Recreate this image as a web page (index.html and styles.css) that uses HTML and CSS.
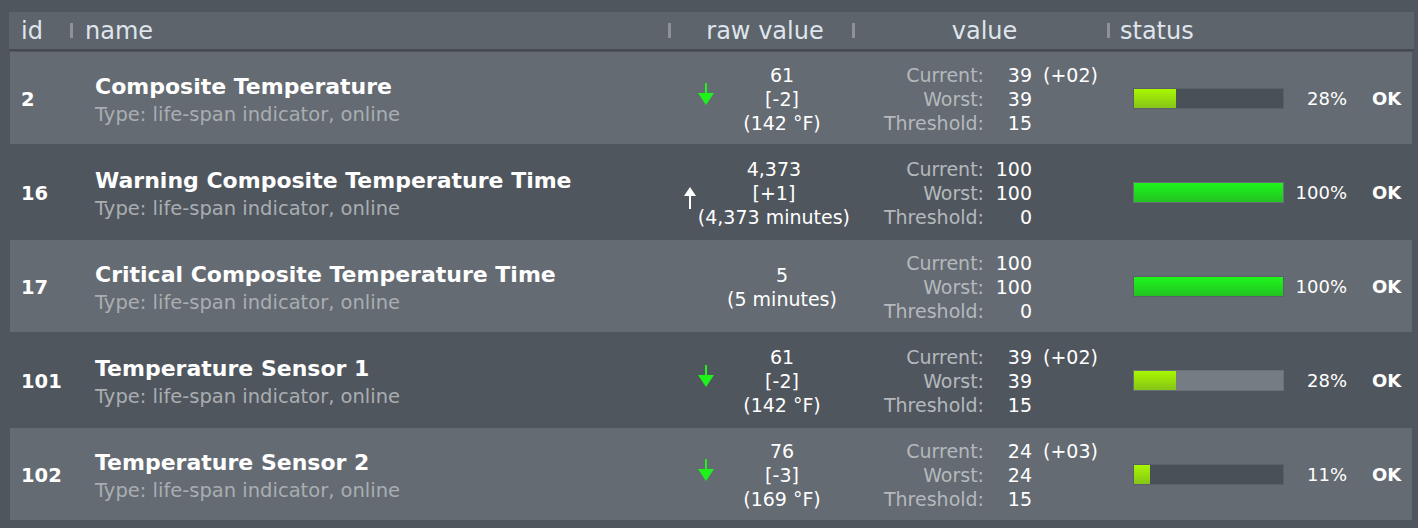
FILE: index.html
```html
<!DOCTYPE html>
<html>
<head>
<meta charset="utf-8">
<link rel="stylesheet" href="styles.css">
</head>
<body>
<div class="table">
  <div class="thead">
    <div class="th th-id">id</div>
    <div class="th th-name"><span class="grip"></span>name</div>
    <div class="th th-center"><span class="grip"></span><span class="th-label">raw value</span></div>
    <div class="th th-center"><span class="grip"></span><span class="th-label">value</span></div>
    <div class="th th-status"><span class="grip"></span>status</div>
  </div>

  <div class="row light">
    <div class="c-id">2</div>
    <div class="c-name"><div class="title">Composite Temperature</div><div class="sub">Type: life-span indicator, online</div></div>
    <div class="c-raw">
      <svg class="arr-down" width="16" height="22" viewBox="0 0 16 22"><rect x="7" y="0" width="2" height="12" fill="#1ef21a"/><polygon points="0,10 16,10 8,22" fill="#1ef21a"/></svg>
      <div class="raw-box"><div>61</div><div>[-2]</div><div>(142 °F)</div></div>
    </div>
    <div class="c-val">
      <span class="lbl">Current:</span><span class="num">39</span><span class="delta">(+02)</span>
      <span class="lbl">Worst:</span><span class="num">39</span><span class="delta"></span>
      <span class="lbl">Threshold:</span><span class="num">15</span><span class="delta"></span>
    </div>
    <div class="c-status">
      <div class="bar"><div class="fill lime" style="width:28%"></div></div>
      <div class="pct">28%</div>
      <div class="ok">OK</div>
    </div>
  </div>

  <div class="row dark">
    <div class="c-id">16</div>
    <div class="c-name"><div class="title">Warning Composite Temperature Time</div><div class="sub">Type: life-span indicator, online</div></div>
    <div class="c-raw">
      <svg class="arr-up" width="12" height="22" viewBox="0 0 12 22"><polygon points="6,0 12,9 0,9" fill="#ffffff"/><rect x="5" y="8" width="2" height="14" fill="#ffffff"/></svg>
      <div class="raw-box"><div>4,373</div><div>[+1]</div><div>(4,373 minutes)</div></div>
    </div>
    <div class="c-val">
      <span class="lbl">Current:</span><span class="num">100</span><span class="delta"></span>
      <span class="lbl">Worst:</span><span class="num">100</span><span class="delta"></span>
      <span class="lbl">Threshold:</span><span class="num">0</span><span class="delta"></span>
    </div>
    <div class="c-status">
      <div class="bar"><div class="fill green" style="width:100%"></div></div>
      <div class="pct">100%</div>
      <div class="ok">OK</div>
    </div>
  </div>

  <div class="row light">
    <div class="c-id">17</div>
    <div class="c-name"><div class="title">Critical Composite Temperature Time</div><div class="sub">Type: life-span indicator, online</div></div>
    <div class="c-raw">
      <div class="raw-box"><div>5</div><div>(5 minutes)</div></div>
    </div>
    <div class="c-val">
      <span class="lbl">Current:</span><span class="num">100</span><span class="delta"></span>
      <span class="lbl">Worst:</span><span class="num">100</span><span class="delta"></span>
      <span class="lbl">Threshold:</span><span class="num">0</span><span class="delta"></span>
    </div>
    <div class="c-status">
      <div class="bar"><div class="fill green" style="width:100%"></div></div>
      <div class="pct">100%</div>
      <div class="ok">OK</div>
    </div>
  </div>

  <div class="row dark">
    <div class="c-id">101</div>
    <div class="c-name"><div class="title">Temperature Sensor 1</div><div class="sub">Type: life-span indicator, online</div></div>
    <div class="c-raw">
      <svg class="arr-down" width="16" height="22" viewBox="0 0 16 22"><rect x="7" y="0" width="2" height="12" fill="#1ef21a"/><polygon points="0,10 16,10 8,22" fill="#1ef21a"/></svg>
      <div class="raw-box"><div>61</div><div>[-2]</div><div>(142 °F)</div></div>
    </div>
    <div class="c-val">
      <span class="lbl">Current:</span><span class="num">39</span><span class="delta">(+02)</span>
      <span class="lbl">Worst:</span><span class="num">39</span><span class="delta"></span>
      <span class="lbl">Threshold:</span><span class="num">15</span><span class="delta"></span>
    </div>
    <div class="c-status">
      <div class="bar"><div class="fill lime" style="width:28%"></div></div>
      <div class="pct">28%</div>
      <div class="ok">OK</div>
    </div>
  </div>

  <div class="row light">
    <div class="c-id">102</div>
    <div class="c-name"><div class="title">Temperature Sensor 2</div><div class="sub">Type: life-span indicator, online</div></div>
    <div class="c-raw">
      <svg class="arr-down" width="16" height="22" viewBox="0 0 16 22"><rect x="7" y="0" width="2" height="12" fill="#1ef21a"/><polygon points="0,10 16,10 8,22" fill="#1ef21a"/></svg>
      <div class="raw-box"><div>76</div><div>[-3]</div><div>(169 °F)</div></div>
    </div>
    <div class="c-val">
      <span class="lbl">Current:</span><span class="num">24</span><span class="delta">(+03)</span>
      <span class="lbl">Worst:</span><span class="num">24</span><span class="delta"></span>
      <span class="lbl">Threshold:</span><span class="num">15</span><span class="delta"></span>
    </div>
    <div class="c-status">
      <div class="bar"><div class="fill lime" style="width:11%"></div></div>
      <div class="pct">11%</div>
      <div class="ok">OK</div>
    </div>
  </div>
</div>
</body>
</html>
```

FILE: styles.css
```css
html, body {
  margin: 0;
  padding: 0;
  background: #50565d;
  font-family: "DejaVu Sans", "Liberation Sans", sans-serif;
  color: #ffffff;
}

.table {
  margin: 12px 4px 0 9px;
  display: flex;
  flex-direction: column;
  gap: 2px;
}

.thead,
.row {
  display: grid;
  grid-template-columns: 61px 598px 184px 255px 1fr;
}

.thead {
  height: 37px;
  background: #5e646b;
  border-bottom: 2px solid #464b51;
  margin-bottom: -1px;
  color: #dfe5ec;
  font-size: 24px;
}

.th {
  display: flex;
  align-items: center;
  position: relative;
  white-space: nowrap;
}

.th-id { padding-left: 12px; }
.th-name { padding-left: 15px; }
.th-status { padding-left: 13px; }
.th-center { justify-content: center; padding-left: 10px; }

.grip {
  position: absolute;
  left: 0;
  top: 11px;
  width: 3px;
  height: 15px;
  background: #8c9298;
}

.row {
  height: 92px;
  margin-left: 1px;
  margin-right: 2px;
  align-items: center;
}

.row.light { background: #656b72; }
.row.dark { background: transparent; }

.c-id {
  padding-left: 11px;
  padding-top: 2px;
  font-weight: bold;
  font-size: 19.5px;
}

.c-name {
  padding-left: 24px;
  padding-top: 4px;
}

.title {
  font-weight: bold;
  font-size: 22px;
  line-height: 27px;
  white-space: nowrap;
}

.sub {
  color: #a9aeb3;
  font-size: 19.5px;
  line-height: 24px;
  margin-top: 3px;
  white-space: nowrap;
}

.c-raw {
  display: flex;
  justify-content: flex-end;
  align-items: center;
  padding-right: 3px;
  padding-top: 1px;
  font-size: 19px;
  line-height: 24px;
}

.raw-box {
  min-width: 136px;
  text-align: center;
  white-space: nowrap;
}

.arr-down { margin-top: -9px; }
.arr-up { margin-top: 10px; margin-right: 2px; }

.c-val {
  display: grid;
  grid-template-columns: 131px 48px auto;
  padding-top: 1px;
  font-size: 19px;
  line-height: 24px;
  white-space: nowrap;
}

.lbl {
  color: #b4b9bd;
  text-align: right;
}

.num { text-align: right; }
.delta { padding-left: 11px; }

.c-status {
  display: flex;
  align-items: center;
  padding-left: 25px;
  font-size: 18px;
}

.bar {
  width: 151px;
  height: 21px;
  box-sizing: border-box;
  border: 1px solid #5a6067;
  background: #4a5058;
  display: flex;
}

.dark .bar {
  background: #767c83;
  border-color: #6a7077;
}

.fill { height: 100%; }
.fill.lime { background: linear-gradient(#a8f800, #86c418); }
.fill.green { background: linear-gradient(#1ef61a, #22c222); }

.pct {
  width: 63px;
  text-align: right;
}

.ok {
  margin-left: 25px;
  font-weight: bold;
}
```
